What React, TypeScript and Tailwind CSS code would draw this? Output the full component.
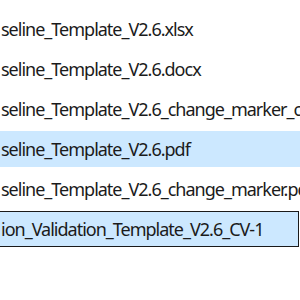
import React from 'react';

const rows = [
  'seline_Template_V2.6.xlsx',
  'seline_Template_V2.6.docx',
  'seline_Template_V2.6_change_marker_comments.docx',
  'seline_Template_V2.6.pdf',
  'seline_Template_V2.6_change_marker.pdf',
];

export default function App() {
  return (
    <div
      className="w-[300px] h-[300px] overflow-hidden bg-white text-[#1b1b1b] text-[18px] tracking-[-1px]"
      style={{ fontFamily: '"Noto Sans", "Open Sans", sans-serif' }}
    >
      <div className="flex flex-col gap-[4px] pt-[11px]">
        {rows.map((name, i) => (
          <div
            key={name}
            className={
              'h-[36px] flex items-center pl-[1px] whitespace-nowrap overflow-hidden ' +
              (i === 3 ? 'bg-[#cce8ff]' : '')
            }
          >
            {name}
          </div>
        ))}
        <div className="h-[36px] w-[299px] flex items-center border border-[#1a1a1a] border-l-0 bg-[#cce8ff] whitespace-nowrap overflow-hidden pl-[1px]">
          ion_Validation_Template_V2.6_CV-1
        </div>
      </div>
    </div>
  );
}
